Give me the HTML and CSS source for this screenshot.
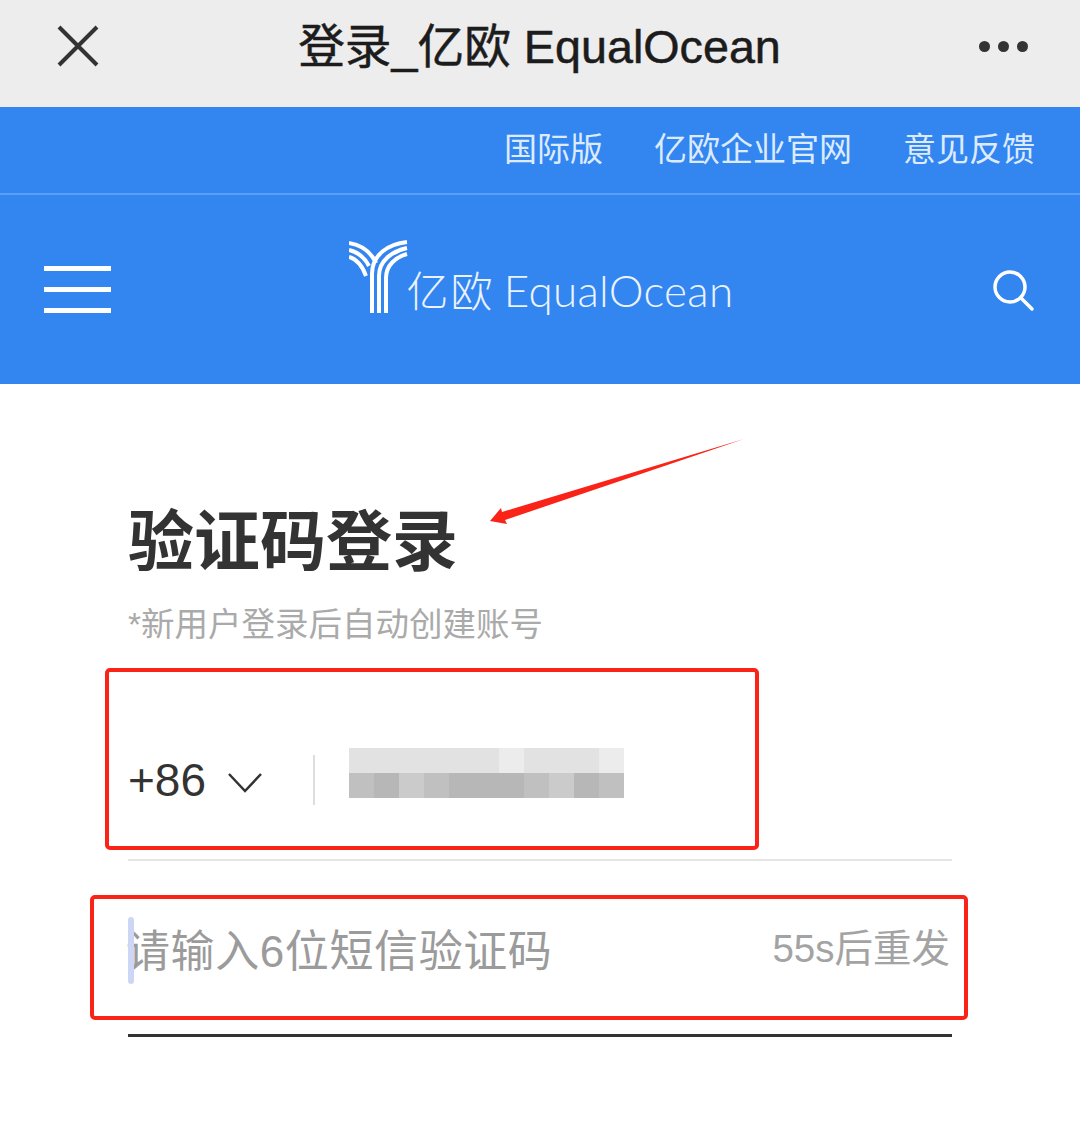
FILE: index.html
```html
<!DOCTYPE html>
<html lang="zh-CN">
<head>
  <meta charset="UTF-8" />
  <meta name="viewport" content="width=device-width, initial-scale=1.0">
  <title>登录_亿欧 EqualOcean</title>
  <link rel="stylesheet" href="styles.css">
</head>

<body>
  <div class="page">
    <div class="wx-bar">
      <svg class="wx-close" width="44" height="44" viewBox="0 0 44 44">
        <path d="M3 3 L41 41 M41 3 L3 41" />
      </svg>
      <div class="wx-title">登录_亿欧 EqualOcean</div>
      <div class="wx-more"><i></i><i></i><i></i></div>
    </div>

    <div class="top-links">
      <a>国际版</a>
      <a>亿欧企业官网</a>
      <a>意见反馈</a>
    </div>

    <div class="nav">
      <div class="menu-btn"><i></i><i></i><i></i></div>
      <div class="logo">
        <svg class="logo-mark" width="60" height="74" viewBox="0 0 60 74">
          <g>
            <path d="M23 73 V34 C23 14 40 4 58 2" />
            <path d="M30 73 V36 C30 20 44 11 58 8" />
            <path d="M37 73 V38 C37 25 47 17 58 14" />
            <path d="M0 3 C12 5 22 12 27 23" />
            <path d="M0 10 C8 12 15 16 20 26" />
            <path d="M0 17 C7 19 13 25 17 36" />
          </g>
        </svg>
        <span class="logo-text"><span class="logo-cn">亿欧</span> EqualOcean</span>
      </div>
      <svg class="search-icon" width="44" height="44" viewBox="0 0 44 44">
        <circle cx="19" cy="19" r="15" />
        <path d="M30 30 L41 41" />
      </svg>
    </div>

    <div class="form">
      <h1 class="form-title">验证码登录</h1>
      <p class="form-sub">*新用户登录后自动创建账号</p>

      <div class="field field-phone">
        <span class="code">+86</span>
        <svg class="caret" width="36" height="24" viewBox="0 0 36 24">
          <path d="M2 3 L18 20 L34 3" />
        </svg>
        <span class="divider"></span>
        <div class="mosaic">
          <i class="m1"></i><i class="m1"></i><i class="m1"></i><i class="m1"></i><i class="m1"></i><i class="m1"></i><i class="m0"></i><i class="m1"></i><i class="m1"></i><i class="m1"></i><i class="m0"></i>
          <i class="m3"></i><i class="m4"></i><i class="m2"></i><i class="m3"></i><i class="m4"></i><i class="m4"></i><i class="m4"></i><i class="m3"></i><i class="m2"></i><i class="m4"></i><i class="m3"></i>
        </div>
      </div>

      <div class="field field-code">
        <span class="cursor"></span>
        <span class="placeholder">请输入6位短信验证码</span>
        <span class="resend">55s后重发</span>
      </div>
    </div>

    <div class="note-box note-phone"></div>
    <div class="note-box note-code"></div>
    <svg class="note-arrow" width="260" height="90" viewBox="0 0 260 90">
      <path d="M254 0 L12 73 L11 69 L0 82 L17 85 L15 81 Z" />
    </svg>
  </div>
</body>
</html>
```

FILE: styles.css
```css
* {
  box-sizing: border-box;
}

body {
  margin: 0;
  background-color: #fff;
  font-family: "Liberation Sans", "Noto Sans CJK SC", sans-serif;
}

.page {
  position: relative;
  width: 1080px;
  height: 1122px;
  overflow: hidden;
}

.wx-bar {
  height: 107px;
  background-color: #ededed;
  display: flex;
  align-items: center;
  justify-content: space-between;
  padding: 0 52px 15px 56px;
}

.wx-close path {
  fill: none;
  stroke: #333;
  stroke-width: 4;
}

.wx-title {
  font-size: 46.7px;
  color: #1c1c1c;
  -webkit-text-stroke: 0.5px #1c1c1c;
  margin-bottom: 8px;
}

.wx-more {
  display: flex;
  gap: 8px;
}

.wx-more i {
  width: 11px;
  height: 11px;
  border-radius: 50%;
  background-color: #333;
}

.top-links {
  height: 88px;
  background-color: #3385f0;
  border-bottom: 2px solid #56a0fa;
  display: flex;
  justify-content: flex-end;
  align-items: center;
  gap: 51px;
  padding: 0 45px 7px 0;
}

.top-links a {
  font-size: 33px;
  color: #dcebff;
}

.nav {
  height: 189px;
  background-color: #3385f0;
  display: flex;
  align-items: center;
  justify-content: space-between;
  padding: 0 45px 0 44px;
}

.menu-btn {
  display: flex;
  flex-direction: column;
  gap: 16px;
  width: 67px;
}

.menu-btn i {
  height: 5px;
  background-color: #fff;
}

.logo {
  display: flex;
  align-items: flex-end;
  height: 76px;
  margin: 0 20px 27px 0;
  color: #eaf3ff;
}

.logo-mark g {
  fill: none;
  stroke: #fff;
  stroke-width: 4;
}

.logo-text {
  font-family: Lato, "Noto Sans CJK SC", sans-serif;
  font-weight: 300;
  font-size: 44px;
  line-height: 54px;
  letter-spacing: 0.3px;
  word-spacing: -3px;
  white-space: nowrap;
  margin: 0 0 -4px -2px;
}

.logo-cn {
  font-size: 42px;
  letter-spacing: 2px;
}

.search-icon {
  fill: none;
  stroke: #fff;
  stroke-width: 3.5;
  stroke-linecap: round;
}

.form {
  padding: 110px 128px 0;
}

.form-title {
  margin: 0;
  font-size: 66px;
  line-height: 96px;
  font-weight: 700;
  color: #333;
}

.form-sub {
  margin: 13px 0 1px;
  font-size: 33.5px;
  line-height: 44px;
  color: #aaa;
}

.field {
  display: flex;
  align-items: center;
  margin: 0;
}

.field-phone {
  height: 213px;
  padding-top: 116px;
  padding-bottom: 63px;
  border-bottom: 2px solid #e5e5e5;
}

.code {
  font-size: 46px;
  color: #333;
}

.caret {
  margin: 6px 0 0 21px;
  fill: none;
  stroke: #333;
  stroke-width: 2.5;
}

.divider {
  width: 2px;
  height: 50px;
  background-color: #ddd;
  margin-left: 50px;
}

.mosaic {
  display: grid;
  grid-template-columns: repeat(11, 25px);
  grid-auto-rows: 25px;
  margin: -14px 0 0 34px;
}

.m0 { background-color: #ececec; }
.m1 { background-color: #e2e2e2; }
.m2 { background-color: #cbcbcb; }
.m3 { background-color: #c0c0c0; }
.m4 { background-color: #b7b7b7; }

.field-code {
  position: relative;
  height: 176px;
  justify-content: space-between;
  border-bottom: 3px solid #333;
}

.cursor {
  position: absolute;
  left: 0;
  top: 56px;
  width: 6px;
  height: 67px;
  border-radius: 3px;
  background-color: #cdd6f5;
}

.placeholder {
  font-size: 44px;
  letter-spacing: 0.6px;
  margin-left: -2px;
  color: #9b9b9b;
}

.resend {
  font-size: 38.5px;
  color: #a3a3a3;
  margin-right: 2px;
  margin-bottom: 6px;
}

.note-box {
  position: absolute;
  border: 4px solid #fa2318;
  border-radius: 5px;
}

.note-phone {
  left: 105px;
  top: 668px;
  width: 654px;
  height: 182px;
}

.note-code {
  left: 90px;
  top: 895px;
  width: 878px;
  height: 125px;
}

.note-arrow {
  position: absolute;
  left: 490px;
  top: 439px;
  fill: #fa2318;
}
```
